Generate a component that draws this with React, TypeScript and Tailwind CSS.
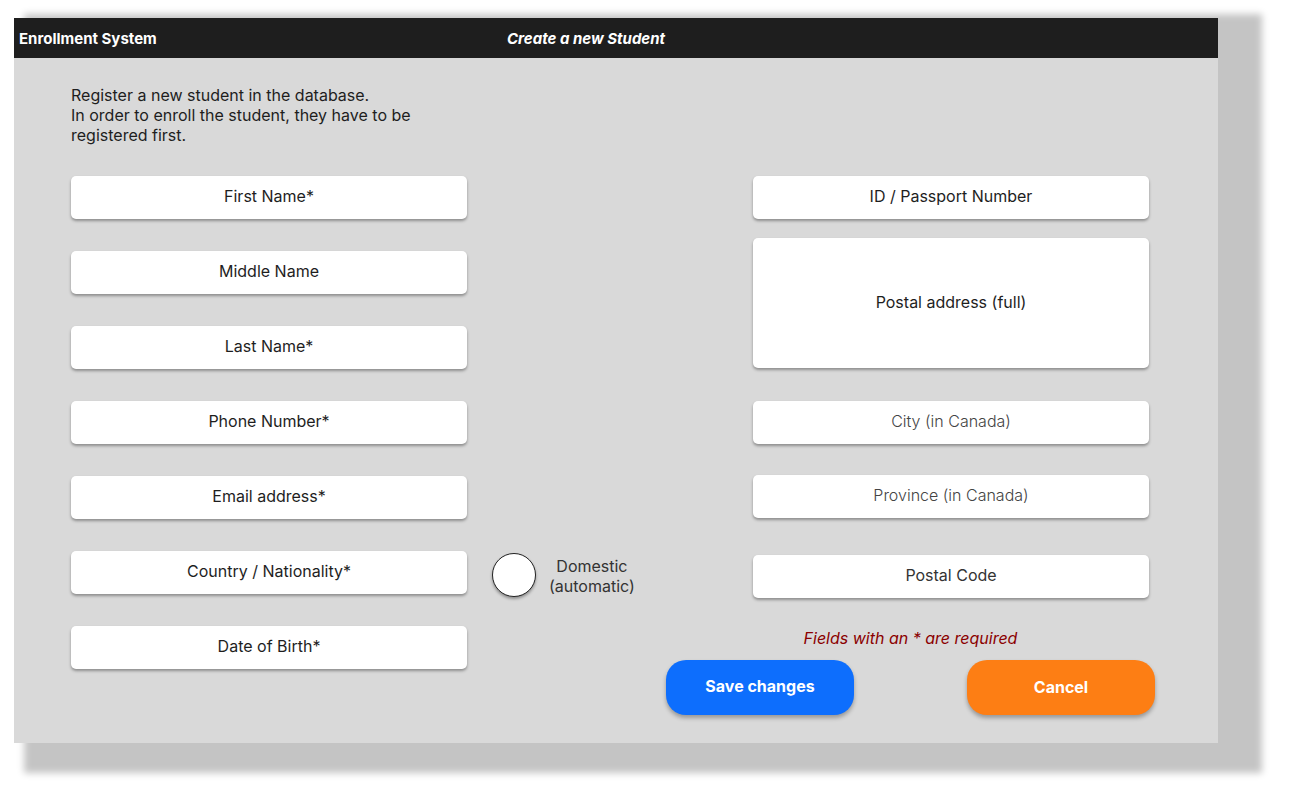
import React from "react";

const Field: React.FC<{ label: string; className?: string; textClass?: string }> = ({
  label,
  className = "h-[43px]",
  textClass = "text-[#1e1e1e]",
}) => (
  <div
    className={`w-[396px] ${className} bg-white rounded-[5px] shadow-[0_2px_3px_rgba(0,0,0,0.35)] flex items-center justify-center pb-[3px]`}
  >
    <span className={`text-[16px] ${textClass}`}>{label}</span>
  </div>
);

const leftFields = [
  "First Name*",
  "Middle Name",
  "Last Name*",
  "Phone Number*",
  "Email address*",
  "Country / Nationality*",
  "Date of Birth*",
];

export default function App() {
  return (
    <div className="w-[1292px] h-[801px] bg-white pt-[18px] pl-[14px] font-['Inter',sans-serif]">
      <div className="w-[1204px] h-[725px] bg-[#d9d9d9] shadow-[27px_13px_7px_17px_rgba(0,0,0,0.23)]">
        {/* header */}
        <div className="h-[40px] bg-[#1e1e1e] flex items-center pl-[5px] pt-[3px] text-white text-[15px] font-bold">
          <span className="w-[488px]">Enrollment System</span>
          <span className="italic">Create a new Student</span>
        </div>

        <div className="pl-[57px] pt-[27px]">
          <p className="text-[16px] leading-[20px] text-[#1e1e1e] w-[370px]">
            Register a new student in the database.
            <br />
            In order to enroll the student, they have to be registered first.
          </p>

          <div className="flex mt-[31px]">
            {/* left column */}
            <div className="flex flex-col gap-[32px]">
              {leftFields.map((f) => (
                <Field key={f} label={f} />
              ))}
            </div>

            {/* right area */}
            <div className="flex flex-col">
              <div className="flex">
                <div className="w-[286px] pl-[25px] pt-[377px]">
                  <div className="flex items-center gap-[13px]">
                    <div className="w-[44px] h-[44px] rounded-full bg-white border border-[#222] shadow-[0_2px_3px_rgba(0,0,0,0.35)]" />
                    <div className="mt-[2px] text-[16px] leading-[20px] text-[#333] text-center">
                      Domestic
                      <br />
                      (automatic)
                    </div>
                  </div>
                </div>
                <div className="flex flex-col">
                  <Field label="ID / Passport Number" />
                  <div className="mt-[19px]">
                    <Field label="Postal address (full)" className="h-[130px]" />
                  </div>
                  <div className="mt-[33px]">
                    <Field label="City (in Canada)" textClass="text-[#444] font-light" />
                  </div>
                  <div className="mt-[31px]">
                    <Field label="Province (in Canada)" textClass="text-[#444] font-light" />
                  </div>
                  <div className="mt-[37px]">
                    <Field label="Postal Code" textClass="text-[#333]" />
                  </div>
                </div>
              </div>

              <div className="ml-[199px] w-[489px] mt-[30px] flex flex-col">
                <p className="text-center text-[16px] leading-[20px] italic text-[#8b0000]">
                  Fields with an * are required
                </p>
                <div className="flex justify-between mt-[12px]">
                  <button className="w-[188px] h-[55px] pb-[3px] rounded-[20px] bg-[#0d6efd] text-white font-bold text-[16px] shadow-[0_3px_4px_rgba(0,0,0,0.3)]">
                    Save changes
                  </button>
                  <button className="w-[188px] h-[55px] pb-[2px] rounded-[20px] bg-[#fd7e14] text-white font-bold text-[16px] shadow-[0_3px_4px_rgba(0,0,0,0.3)]">
                    Cancel
                  </button>
                </div>
              </div>
            </div>
          </div>
        </div>
      </div>
    </div>
  );
}
